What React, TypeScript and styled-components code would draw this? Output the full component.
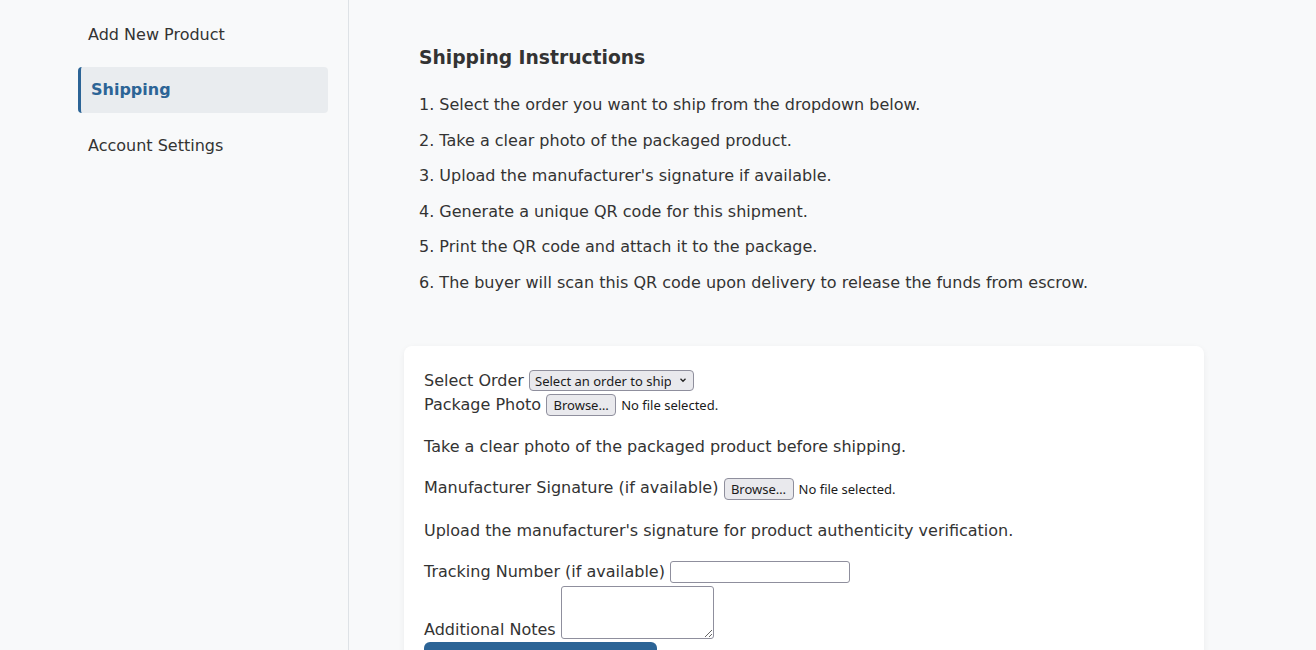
import React, { FC } from "react"
import styled, { createGlobalStyle } from "styled-components"

const GlobalStyle = createGlobalStyle`
  body {
    margin: 0;
    background: #f8f9fa;
    color: #333;
    font-family: "DejaVu Sans", Verdana, sans-serif;
    font-size: 16px;
  }
`

const steps = [
  "Select the order you want to ship from the dropdown below.",
  "Take a clear photo of the packaged product.",
  "Upload the manufacturer's signature if available.",
  "Generate a unique QR code for this shipment.",
  "Print the QR code and attach it to the package.",
  "The buyer will scan this QR code upon delivery to release the funds from escrow.",
]

const navItems = ["Add New Product", "Shipping", "Account Settings"]

const FileInput: FC = () => (
  <FileWrap>
    <BrowseButton type="button">Browse…</BrowseButton>
    <FileName>No file selected.</FileName>
  </FileWrap>
)

const App: FC = () => {
  return (
    <>
      <GlobalStyle />
      <Layout>
        <Sidebar>
          {navItems.map(item => (
            <NavItem key={item} $active={item === "Shipping"}>{item}</NavItem>
          ))}
        </Sidebar>
        <Main>
          <Instructions>
            <Heading>Shipping Instructions</Heading>
            <StepList>
              {steps.map((s, i) => (
                <Step key={s}>{i + 1}. {s}</Step>
              ))}
            </StepList>
          </Instructions>
          <Card>
            <Row>
              <Label>Select Order</Label>{" "}
              <SelectWrap>
                <Select defaultValue="">
                  <option value="">Select an order to ship</option>
                </Select>
                <Chevron viewBox="0 0 10 10">
                  <path d="M2.5 3.8 L5 6.3 L7.5 3.8" fill="none" stroke="#222" strokeWidth="1.3" />
                </Chevron>
              </SelectWrap>
            </Row>
            <Row>
              <Label>Package Photo</Label>{" "}
              <FileInput />
            </Row>
            <Hint>Take a clear photo of the packaged product before shipping.</Hint>
            <Row>
              <Label>Manufacturer Signature (if available)</Label>{" "}
              <FileInput />
            </Row>
            <Hint>Upload the manufacturer's signature for product authenticity verification.</Hint>
            <Row>
              <Label>Tracking Number (if available)</Label>{" "}
              <TextInput type="text" />
            </Row>
            <Row $gap={2}>
              <Label>Additional Notes</Label>{" "}
              <Notes />
            </Row>
            <SubmitButton type="button">Generate QR Code &amp; Ship</SubmitButton>
          </Card>
        </Main>
      </Layout>
    </>
  )
}

const Layout = styled.div`
  display: flex;
  min-height: 650px;
`

const Sidebar = styled.nav`
  width: 250px;
  flex: none;
  padding: 11px 20px 0 78px;
  border-right: 1px solid #dee2e6;
  display: flex;
  flex-direction: column;
  gap: 9.5px;
`

const NavItem = styled.div<{ $active?: boolean }>`
  height: 46px;
  display: flex;
  align-items: center;
  padding: 0 10px;
  border-radius: 4px;
  border-left: 3px solid ${p => (p.$active ? "#2c6496" : "transparent")};
  margin-left: ${p => (p.$active ? "0" : "-3px")};
  background: ${p => (p.$active ? "#e9ecef" : "transparent")};
  color: ${p => (p.$active ? "#2c6496" : "#333")};
  font-weight: ${p => (p.$active ? "bold" : "normal")};
`

const Main = styled.main`
  flex: 1;
  padding: 32px 0 0 55px;
`

const Instructions = styled.section`
  width: 770px;
  padding: 15px;
`

const Heading = styled.h3`
  margin: 0 0 23px;
  font-size: 18.72px;
  line-height: 22px;
  font-weight: bold;
`

const StepList = styled.ol`
  list-style: none;
  margin: 0;
  padding: 0;
`

const Step = styled.li`
  line-height: 25.6px;
  margin-bottom: 10px;
`

const Card = styled.section`
  width: 760px;
  margin-top: 25px;
  padding: 23px 20px 20px;
  background: #fff;
  border-radius: 8px;
  box-shadow: 0 2px 6px rgba(0, 0, 0, 0.06);
  line-height: 24px;
`

const Row = styled.div<{ $gap?: number }>`
  line-height: 24px;
  margin-top: ${p => p.$gap ?? 0}px;
`

const Label = styled.label``

const Hint = styled.p`
  margin: 17px 0 16px;
  line-height: 26px;
`

const controlFont = `
  font-family: "Noto Sans", "Open Sans", sans-serif;
  font-size: 13px;
  color: #1b1b1b;
`

const SelectWrap = styled.span`
  position: relative;
  display: inline-block;
  vertical-align: baseline;
`

const Select = styled.select`
  ${controlFont}
  appearance: none;
  height: 21px;
  width: 165px;
  padding: 0 22px 0 5px;
  border: 1px solid #8f8f9d;
  border-radius: 4px;
  background: #e9e9ed;
`

const Chevron = styled.svg`
  position: absolute;
  right: 6px;
  top: 6px;
  width: 10px;
  height: 10px;
  pointer-events: none;
`

const FileWrap = styled.span`
  display: inline-flex;
  align-items: center;
  gap: 5px;
  vertical-align: middle;
`

const BrowseButton = styled.button`
  ${controlFont}
  height: 22px;
  width: 70px;
  padding: 0;
  border: 1px solid #8f8f9d;
  border-radius: 4px;
  background: #e9e9ed;
`

const FileName = styled.span`
  ${controlFont}
`

const TextInput = styled.input`
  box-sizing: border-box;
  width: 180px;
  height: 22px;
  border: 1px solid #8f8f9d;
  border-radius: 3px;
  background: #fff;
  vertical-align: middle;
`

const Notes = styled.textarea`
  box-sizing: border-box;
  width: 153px;
  height: 53px;
  border: 1px solid #8f8f9d;
  border-radius: 3px;
  vertical-align: text-bottom;
`

const SubmitButton = styled.button`
  display: block;
  margin-top: 0;
  width: 233px;
  padding: 14px 20px 12px;
  border: none;
  border-radius: 6px;
  background: #2c6496;
  color: #fff;
  font-family: "DejaVu Sans", sans-serif;
  font-size: 16px;
  line-height: 20px;
`

export default App
